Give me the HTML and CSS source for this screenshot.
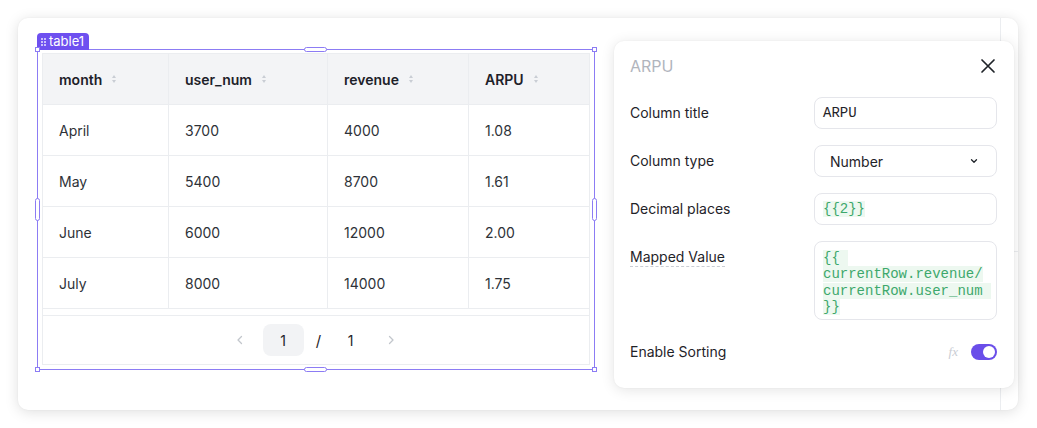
FILE: index.html
```html
<!DOCTYPE html>
<html>
<head>
<meta charset="utf-8">
<link rel="stylesheet" href="styles.css">
</head>
<body>
<div class="stage">
  <div class="card">
    <div class="canvas">
      <div class="selection">
        <div class="tag"><span class="dots"><i></i><i></i><i></i><i></i><i></i><i></i></span>table1</div>
        <span class="h corner tl"></span><span class="h corner tr"></span>
        <span class="h corner bl"></span><span class="h corner br"></span>
        <span class="h pill-h top"></span><span class="h pill-h bottom"></span>
        <span class="h pill-v left"></span><span class="h pill-v right"></span>
        <div class="tbl">
          <div class="row head">
            <div class="cell">month<span class="sort"></span></div>
            <div class="cell">user_num<span class="sort"></span></div>
            <div class="cell">revenue<span class="sort"></span></div>
            <div class="cell">ARPU<span class="sort"></span></div>
          </div>
          <div class="row"><div class="cell">April</div><div class="cell">3700</div><div class="cell">4000</div><div class="cell">1.08</div></div>
          <div class="row"><div class="cell">May</div><div class="cell">5400</div><div class="cell">8700</div><div class="cell">1.61</div></div>
          <div class="row"><div class="cell">June</div><div class="cell">6000</div><div class="cell">12000</div><div class="cell">2.00</div></div>
          <div class="row"><div class="cell">July</div><div class="cell">8000</div><div class="cell">14000</div><div class="cell">1.75</div></div>
          <div class="spacer"></div>
          <div class="pager">
            <span class="chev">
              <svg width="12" height="12" viewBox="0 0 12 12"><path d="M7.5 2.5 L4 6 L7.5 9.5" fill="none" stroke="#c2c6cc" stroke-width="1.3" stroke-linecap="round" stroke-linejoin="round"/></svg>
            </span>
            <span class="page current">1</span>
            <span class="slash">/</span>
            <span class="page total">1</span>
            <span class="chev">
              <svg width="12" height="12" viewBox="0 0 12 12"><path d="M4.5 2.5 L8 6 L4.5 9.5" fill="none" stroke="#c2c6cc" stroke-width="1.3" stroke-linecap="round" stroke-linejoin="round"/></svg>
            </span>
          </div>
        </div>
      </div>
    </div>
    <div class="side">
      <div class="side-top"></div>
      <div class="side-bottom"></div>
    </div>
  </div>
</div>

<div class="panel">
  <div class="panel-head">
    <span class="panel-title">ARPU</span>
    <svg class="close" width="16" height="16" viewBox="0 0 16 16"><path d="M2 2 L14 14 M14 2 L2 14" stroke="#1f2329" stroke-width="1.7" stroke-linecap="round"/></svg>
  </div>
  <div class="form">
    <div class="frow">
      <div class="label">Column title</div>
      <div class="input mono-plain">ARPU</div>
    </div>
    <div class="frow">
      <div class="label">Column type</div>
      <div class="input select"><span>Number</span>
        <svg width="10" height="10" viewBox="0 0 10 10"><path d="M2.5 3.8 L5 6.3 L7.5 3.8" fill="none" stroke="#1f2329" stroke-width="1.3" stroke-linecap="round" stroke-linejoin="round"/></svg>
      </div>
    </div>
    <div class="frow">
      <div class="label">Decimal places</div>
      <div class="input code"><span class="hl">{{2}}</span></div>
    </div>
    <div class="frow top">
      <div class="label"><span class="dashed">Mapped Value</span></div>
      <div class="input code area"><div class="line"><span class="hl">{{ </span></div><div class="line"><span class="hl">currentRow.revenue/</span></div><div class="line"><span class="hl">currentRow.user_num </span></div><div class="line"><span class="hl">}}</span></div></div>
    </div>
    <div class="frow">
      <div class="label">Enable Sorting</div>
      <div class="toggle-wrap">
        <span class="fx">fx</span>
        <span class="toggle"><span class="knob"></span></span>
      </div>
    </div>
  </div>
</div>
</body>
</html>
```

FILE: styles.css
```css
* { box-sizing: border-box; }
html, body { margin: 0; padding: 0; background: #ffffff; }
body {
  width: 1037px;
  height: 428px;
  overflow: hidden;
  position: relative;
  font-family: Inter, "Noto Sans", "Liberation Sans", sans-serif;
  color: #1f2329;
}
.stage { padding: 18px 0 0 18px; }
.card {
  width: 1000px;
  height: 392px;
  background: #fff;
  border-radius: 10px;
  box-shadow: 0 2px 14px rgba(0, 0, 0, 0.13), 0 0 2px rgba(0, 0, 0, 0.05);
  display: flex;
  overflow: hidden;
}
.canvas {
  width: 982px;
  padding: 31px 0 0 19px;
}
.side {
  flex: 1;
  border-left: 1px solid #ebedf0;
  display: flex;
  flex-direction: column;
}
.side-top { height: 234px; border-bottom: 1px solid #ebedf0; }

.selection {
  position: relative;
  width: 558px;
  border: 1px solid #8c7cf4;
  padding: 3px 4px 4px 4px;
}
.tag {
  position: absolute;
  left: -1px;
  bottom: 100%;
  width: 52px;
  height: 17px;
  padding: 0 0 0 4px;
  background: #6e50f0;
  color: #fff;
  font-size: 13px;
  line-height: 17px;
  border-radius: 4px 4px 0 0;
  display: flex;
  align-items: center;
  gap: 3px;
}
.dots {
  display: grid;
  grid-template-columns: 2px 2px;
  grid-template-rows: 2px 2px 2px;
  gap: 1px 1px;
}
.dots i { display: block; width: 2px; height: 2px; background: rgba(255,255,255,0.85); border-radius: 1px; }

.h {
  position: absolute;
  background: #fff;
  border: 1px solid #8c7cf4;
  z-index: 2;
}
.corner { width: 5px; height: 5px; }
.tl { left: -3px; top: -3px; }
.tr { right: -3px; top: -3px; }
.bl { left: -3px; bottom: -3px; }
.br { right: -3px; bottom: -3px; }
.pill-h { width: 23px; height: 5px; border-radius: 3px; left: 266px; }
.top { top: -3px; }
.bottom { bottom: -3px; }
.pill-v { width: 5px; height: 23px; border-radius: 3px; top: 148px; }
.left { left: -3px; }
.right { right: -3px; }

.tbl {
  width: 548px;
  border: 1px solid #ebedf0;
  font-size: 14px;
}
.row {
  display: grid;
  grid-template-columns: 126px 159px 141px 1fr;
  height: 51px;
  border-bottom: 1px solid #ebedf0;
}
.row.head { height: 51px; background: #f3f4f6; font-weight: 600; color: #1d2129; }
.cell {
  display: flex;
  align-items: center;
  padding-left: 16px;
  border-right: 1px solid #ebedf0;
  color: #2e3238;
}
.row.head .cell { color: #1d2129; }
.cell:last-child { border-right: none; }
.sort {
  display: inline-block;
  position: relative;
  width: 6px;
  height: 8px;
  margin-left: 9px;
}
.sort::before, .sort::after {
  content: "";
  position: absolute;
  left: 1px;
  border-left: 2px solid transparent;
  border-right: 2px solid transparent;
}
.sort::before { top: 0; border-bottom: 3px solid #c9cdd4; }
.sort::after { bottom: 0; border-top: 3px solid #c9cdd4; }

.spacer { height: 7px; border-bottom: 1px solid #ebedf0; }
.pager {
  height: 48px;
  display: flex;
  align-items: center;
  justify-content: center;
  font-size: 14px;
  color: #1f2329;
  padding-right: 2px;
}
.chev { width: 12px; height: 12px; display: flex; }
.page {
  height: 32px;
  display: flex;
  align-items: center;
  justify-content: center;
  border-radius: 8px;
}
.page.current { width: 41px; background: #f2f3f5; margin-left: 17px; }
.slash { width: 10px; text-align: center; margin: 0 11px 0 10px; font-size: 15px; }
.page.total { width: 32px; margin-right: 18px; }

.panel {
  position: absolute;
  left: 614px;
  top: 41px;
  width: 400px;
  height: 347px;
  background: #fff;
  border-radius: 10px;
  box-shadow: 0 2px 14px rgba(0, 0, 0, 0.11), 0 0 2px rgba(0, 0, 0, 0.06);
  padding: 16px 17px 16px 16px;
}
.panel-head {
  height: 18px;
  display: flex;
  align-items: center;
  justify-content: space-between;
  margin-bottom: 22px;
}
.panel-title { font-size: 16px; color: #b1b5bd; }
.close { margin-right: 1px; }
.form { display: flex; flex-direction: column; gap: 16px; }
.frow {
  display: grid;
  grid-template-columns: 184px 183px;
  align-items: center;
}
.frow.top { align-items: start; }
.label {
  font-size: 14px;
  color: #1f2329;
  line-height: 32px;
}
.dashed { border-bottom: 1px dashed #c9cdd4; padding-bottom: 1px; }
.input {
  height: 32px;
  border: 1px solid #e5e6eb;
  border-radius: 8px;
  display: flex;
  align-items: center;
  padding-left: 8px;
  font-size: 14px;
}
.mono-plain {
  font-family: "Liberation Mono", "DejaVu Sans Mono", monospace;
  font-size: 14px;
  color: #1f2329;
}
.select {
  padding-left: 15px;
  padding-right: 17px;
  justify-content: space-between;
  color: #1f2329;
}
.code {
  font-family: "Liberation Mono", "DejaVu Sans Mono", monospace;
  font-size: 14px;
  color: #3da86c;
}
.hl { background: #edf8f0; white-space: pre; }
.area {
  height: 79px;
  display: block;
  padding-top: 8px;
  line-height: 16.4px;
}
.line { height: 16.4px; }
.toggle-wrap {
  display: flex;
  align-items: center;
  justify-content: flex-end;
  gap: 13px;
}
.fx {
  font-family: "Liberation Serif", serif;
  font-style: italic;
  font-size: 13px;
  color: #c9cdd4;
}
.toggle {
  width: 26px;
  height: 16px;
  border-radius: 8px;
  background: #6a4ee9;
  position: relative;
}
.knob {
  position: absolute;
  right: 2px;
  top: 2px;
  width: 12px;
  height: 12px;
  border-radius: 50%;
  background: #fff;
}
```
